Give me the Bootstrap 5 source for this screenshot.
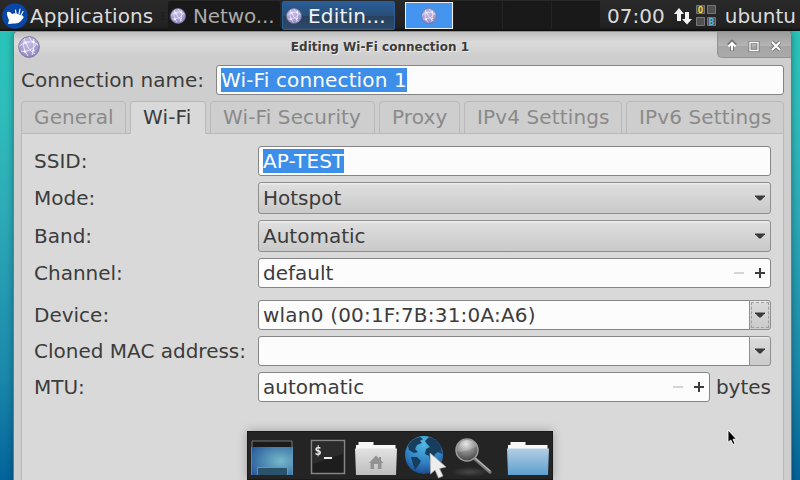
<!DOCTYPE html>
<html lang="en">
<head>
<meta charset="utf-8">
<meta name="viewport" content="width=device-width, initial-scale=1">
<title>Editing Wi-Fi connection 1</title>
<link href="https://cdn.jsdelivr.net/npm/bootstrap@5.3.0/dist/css/bootstrap.min.css" rel="stylesheet">
<style>
body{width:800px;height:480px;font:20px/24px "DejaVu Sans",sans-serif;color:#3c3c3c;background:linear-gradient(#28c4b9 30px,#2fbdbb 110px,#2daab7 215px,#1a88ab 375px,#04639a 480px)}
svg{display:block;flex:none}
.panel{height:31px;background:linear-gradient(#292929,#222 28px,#0e0e0e 31px);color:#dcdcdc}
.panel .menu-btn{width:168px;padding-left:2px}
.menu-btn span{margin-left:2px;letter-spacing:.1px}
.task{height:29px;margin-top:1px;border-radius:2px;white-space:nowrap}
.task span{padding-left:7px}
.task-net{width:112px;background:#191919;color:#a9a9a9;padding-left:2px;letter-spacing:-.1px}
.task-edit{width:113px;margin-left:2px;background:linear-gradient(#2a5d97,#294f79 50%,#28415c 52%,#2c4a6c);border:1px solid #2b5f99;color:#f2f2f2;padding-left:3px;letter-spacing:.2px}
.task-edit span{padding-left:6px}
.pager{width:195px;margin-left:10px;height:28px;background:#191919;margin-top:1px}
.pager div{width:49px;border-left:1px solid #242424}
.pager .current{width:48px;border:1px solid #f0f0f0;background:#4495ef;margin-top:1px;height:27px}
.clock{margin-right:1px}
.window{width:779px;height:470px;margin-left:13px;border:1px solid #777;border-top-color:#919191;border-radius:5px 5px 0 0;background:#cecece;box-shadow:0 0 7px #0005}
.titlebar{height:29px;background:linear-gradient(#bebebe,#dadada 10px,#cecece 25px);border-radius:5px 5px 0 0;font-size:12px;font-weight:bold;text-shadow:1px 1px #eee;margin-bottom:4px}
.win-title{line-height:30px;padding-left:3px;letter-spacing:.02px}
.win-btns{width:74px;height:26px;padding-right:2px;background:linear-gradient(#9b9b9b,#b5b5b5 55%,#a5a5a5 58%,#aaa);border:solid #929292;border-width:0 0 1px 1px;border-radius:0 4px 0 5px}
.win-btns svg{margin-top:2px}
.field{height:30px;border:1px solid #858585;border-radius:3px;background:#fcfcfc;padding:2px 4px;white-space:pre}
.sel{background:#3d8ee8;color:#fff;display:inline-block;height:24px;letter-spacing:.14px}
.addr{letter-spacing:.2px}
.conn{padding:0 7px}
.conn .field{width:568px}
.tabs{height:33px;margin:6px 7px 0;gap:4px;white-space:nowrap;position:relative;z-index:1}
.tab{height:33px;border:1px solid #b9b9b9;border-radius:4px 4px 0 0;color:#8a8a8a;background:#cecece;line-height:30px;padding-left:12px;letter-spacing:.13px}
.tab.on{background:#d9d9d9;color:#3c3c3c;border-bottom-color:#d9d9d9}
.pane{height:360px;margin:-1px 7px 0;border:1px solid #b9b9b9;background:#d9d9d9;padding:12px 12px 0}
.form-line{display:grid;grid-template-columns:224px 1fr;align-items:center;margin-bottom:6px;white-space:nowrap}
.combo{height:32px;border:1px solid #8f8f8f;border-radius:3px;background:linear-gradient(#ececec 1px,#dedede 2px,#c9c9c9);padding:3px 5px 3px 4px}
.drop{width:22px;height:30px;border:1px solid #8f8f8f;border-radius:0 3px 3px 0;background:linear-gradient(#ececec 1px,#dadada 2px,#cbcbcb);margin-left:-1px}
.drop.dash{outline:1px dashed #a0a0a0;outline-offset:-3px}
.dock{position:fixed;left:247px;top:431px;width:306px;height:49px;background:#242424;border:1px solid #191919;box-shadow:0 0 10px #0004}
.pointer{position:fixed;left:727px;top:429px}
</style>
<script src="https://cdn.jsdelivr.net/npm/bootstrap@5.3.0/dist/js/bootstrap.bundle.min.js"></script>
</head>
<body class="overflow-hidden">
<svg width="0" height="0" class="position-absolute">
<defs>
<radialGradient id="gl" cx=".45" cy=".3" r=".75"><stop offset="0" stop-color="#c9c0e8"/><stop offset=".6" stop-color="#a79dd3"/><stop offset="1" stop-color="#8a80ba"/></radialGradient>
<symbol id="net" viewBox="0 0 22 22"><circle cx="11" cy="11" r="10.4" fill="url(#gl)" stroke="#77738f" stroke-width=".8"/><g fill="none" stroke="#f0ecfb" stroke-width=".9"><path d="M1.5 10Q7 5 15.5 6L20 9M6.5 2.5Q4 10 7 15.500L10 20M7 15.500Q15 14 19 7M8 6.500Q10 14 17 18M15.500 3Q17 11 14 19M3 15L7 15.500M11 1Q13 5 15.500 6"/></g><g fill="#fff"><circle cx="7.500" cy="6.500" r="1.200"/><circle cx="15.500" cy="6" r="1.200"/><circle cx="7" cy="15.500" r="1.300"/><circle cx="15.500" cy="14.500" r="1.100"/></g></symbol>
<symbol id="tri" viewBox="0 0 10 6"><path d="M0 .5H10V1.200L6.300 4.900Q5 6 3.700 4.900L0 1.200Z" fill="#3a3a3a"/></symbol>
<radialGradient id="deskg" cx=".7" cy=".5" r=".8"><stop stop-color="#76b9ca"/><stop offset="1" stop-color="#285a9b"/></radialGradient>
<linearGradient id="home" x2="0" y2="1"><stop stop-color="#e2e2e2"/><stop offset="1" stop-color="#bdbdbd"/></linearGradient>
<linearGradient id="bluef" x2="0" y2="1"><stop stop-color="#b3cee2"/><stop offset="1" stop-color="#5d9fcf"/></linearGradient>
<radialGradient id="sea" cx=".5" cy=".2" r=".85"><stop stop-color="#52b9e4"/><stop offset=".6" stop-color="#2f80c2"/><stop offset="1" stop-color="#1b4386"/></radialGradient>
<radialGradient id="lens" cx=".45" cy=".22" r=".75"><stop stop-color="#e2e2e2"/><stop offset=".45" stop-color="#929292"/><stop offset="1" stop-color="#494949"/></radialGradient>
<radialGradient id="shade"><stop stop-color="#484848"/><stop offset="1" stop-color="#484848" stop-opacity="0"/></radialGradient>
</defs></svg>

<header class="panel d-flex">
  <div class="menu-btn d-flex align-items-center">
    <svg width="26" height="26" viewBox="0 0 26 26"><circle cx="13" cy="13" r="12.800" fill="#0846a8"/><path fill="#fff" d="M5 9Q8 8 10 11Q13 9.500 16 11L18 12Q22 12 21.500 15Q20 16 19 18Q16 21 12 20.500L6 21L7 17Q4.500 12 5 9Z"/><path d="M14 10.500L13.500 7M17 11L18 6M19 12L21 8.500" stroke="#fff" stroke-width="1.200" stroke-linecap="round"/></svg>
    <span>Applications</span>
    <svg class="ms-2" width="4" height="8"><path d="M0 1H4M0 4H4M0 7H4" stroke="#1a1a1a"/></svg>
  </div>
  <div class="task task-net d-flex align-items-center"><svg width="16" height="16"><use href="#net"/></svg><span>Netwo...</span></div>
  <div class="task task-edit d-flex align-items-center"><svg width="16" height="16"><use href="#net"/></svg><span>Editin...</span></div>
  <div class="pager d-flex"><div class="current d-flex align-items-center justify-content-center"><svg width="16" height="16"><use href="#net"/></svg></div><div></div><div></div><div></div></div>
  <div class="ms-auto d-flex align-items-center pe-1">
    <span class="clock">07:00</span>
    <svg class="ms-2" width="18" height="18" viewBox="0 0 18 18"><path fill="#f4f4f4" d="M5 1L10 7H7V14H3V7H0ZM11 5H15V12H18L13 17.500L8 12H11Z"/></svg>
    <svg class="ms-1" width="21" height="22" viewBox="0 0 21 22"><g fill="#505050" stroke="#777" stroke-width="1"><path d="M.5 .5H8.500V8.500H.5ZM11.500 .5H19.500V8.500H11.500ZM.5 12.500H8.500V20.500H.5ZM11.500 12.500H19.500V20.500H11.500Z"/></g><g font-family="DejaVu Sans Mono" font-size="9" font-weight="bold" text-anchor="middle"><text x="4.500" y="7.800" fill="#e3d536">O</text><text x="15.500" y="19.800" fill="#5db7e8">B</text></g></svg>
    <span class="ps-2">ubuntu</span>
  </div>
</header>

<main class="window">
  <div class="titlebar d-flex justify-content-between">
    <svg class="mt-1 ms-1" width="22" height="22"><use href="#net"/></svg>
    <span class="win-title flex-grow-1 text-center">Editing Wi-Fi connection 1</span>
    <div class="win-btns d-flex align-items-center justify-content-center">
      <svg width="54" height="14" viewBox="0 0 54 14"><g fill="none" stroke="#737373" stroke-width="4"><path d="M5 12V5M1.500 6.500L5 3L8.500 6.500"/><path d="M23 3.500H31V11.500H23Z" stroke-width="3"/><path d="M45 3L53 11M53 3L45 11"/></g><g fill="none" stroke="#fff" stroke-width="2"><path d="M5 11.500V5M1.500 7.500L5 4L8.500 7.500"/><path d="M23 3.500H31V11.500H23Z" stroke-width="1.300"/><path d="M45 3L53 11M53 3L45 11"/></g></svg>
    </div>
  </div>
  <div class="conn d-flex justify-content-between align-items-center"><label>Connection name:</label><div class="field"><span class="sel">Wi-Fi connection 1</span></div></div>
  <nav class="tabs d-flex">
    <div class="tab" style="width:105px">General</div><div class="tab on" style="width:76px">Wi-Fi</div><div class="tab" style="width:165px">Wi-Fi Security</div><div class="tab" style="width:81px">Proxy</div><div class="tab" style="width:158px">IPv4 Settings</div><div class="tab" style="width:158px">IPv6 Settings</div>
  </nav>
  <section class="pane">
    <div class="form-line"><label>SSID:</label><div class="field"><span class="sel">AP-TEST</span></div></div>
    <div class="form-line"><label>Mode:</label><div class="combo d-flex align-items-center justify-content-between">Hotspot<svg width="10" height="6"><use href="#tri"/></svg></div></div>
    <div class="form-line"><label>Band:</label><div class="combo d-flex align-items-center justify-content-between">Automatic<svg width="10" height="6"><use href="#tri"/></svg></div></div>
    <div class="form-line mb-2 pb-1"><label>Channel:</label><div class="field d-flex align-items-center justify-content-between">default<svg width="32" height="10"><path d="M0 5H10" stroke="#d5d5d5" stroke-width="2"/><path d="M21 5H31M26 0V10" stroke="#3c3c3c" stroke-width="2"/></svg></div></div>
    <div class="form-line"><label>Device:</label><div class="d-flex"><div class="field addr flex-grow-1 rounded-end-0">wlan0 (00:1F:7B:31:0A:A6)</div><div class="drop dash d-flex align-items-center justify-content-center"><svg width="10" height="6"><use href="#tri"/></svg></div></div></div>
    <div class="form-line"><label>Cloned MAC address:</label><div class="d-flex"><div class="field flex-grow-1 rounded-end-0"></div><div class="drop d-flex align-items-center justify-content-center"><svg width="10" height="6"><use href="#tri"/></svg></div></div></div>
    <div class="form-line"><label>MTU:</label><div class="d-flex align-items-center justify-content-between"><div class="field d-flex align-items-center justify-content-between" style="width:452px">automatic<svg width="32" height="10"><path d="M0 5H10" stroke="#d5d5d5" stroke-width="2"/><path d="M21 5H31M26 0V10" stroke="#3c3c3c" stroke-width="2"/></svg></div><span>bytes</span></div></div>
  </section>
</main>

<footer class="dock">
  <svg width="304" height="47" viewBox="248 432 304 47">
    <path d="M251 447H293V475H251Z" fill="url(#deskg)"/><path d="M252 447V441H292V447" fill="#1b1b1b" stroke="#777"/><path d="M251.500 447V475M292.500 447V475" stroke="#6b9bc4" stroke-opacity=".6"/><path d="M257.500 475V467.500H287.500V475" fill="#2b526b" stroke="#79a9bd" stroke-opacity=".7"/>
    <path d="M311.500 440.500H344.500V473.500H311.500Z" fill="#1d1d1d" stroke="#858585" stroke-width="1.500"/><path d="M313 442H343V454L313 464Z" fill="#2b2b2b"/><text x="314.500" y="455" font-family="DejaVu Sans Mono" font-size="12" font-weight="bold" fill="#eee">$</text><path d="M324 458H332" stroke="#eee" stroke-width="2"/>
    <path d="M356 450V445H358.500V442H373.500V445H395.500V450Z" fill="#f7f7f7"/><path d="M355 448.500H397L396 475H356Z" fill="url(#home)"/><path d="M369 463L376 455.500L379 458.500V457H381V460.500L383.500 463H381.500V469H378V464H374V469H370.500V463Z" fill="#929292"/>
    <circle cx="424" cy="455" r="19" fill="url(#sea)"/><g fill="#173d5f"><path d="M408 446Q411 439 420 437L423 439L420 441L422 443L417 445L415 449L418 452L414 453L409 450ZM411 457L417 457L421 461L418 466L415 470L413 464ZM425 441L429 437Q438 439 441 447L442 454L438 452L435 454L433 463L430 462L429 456L425 454L426 449L430 447L427 444Z"/></g><path d="M430 453L446 467L439.500 468.500L443 476L438.500 478L435 470L430.500 474Z" fill="#ededed" stroke="#aaa" stroke-width=".7"/>
    <ellipse cx="470" cy="472" rx="19" ry="5" fill="url(#shade)"/><path d="M474 458L490 472" stroke="#777" stroke-width="3.500" stroke-linecap="round"/><path d="M475 458L490 471" stroke="#b5b5b5" stroke-width="1.200"/><circle cx="467" cy="450" r="11" fill="url(#lens)" stroke="#999" stroke-width="1.500"/><path d="M457 451Q466 453 477 446Q474 440 467 440Q458 441 457 451Z" fill="#fff" opacity=".2"/>
    <path d="M508 450V445H510.500V442H525.500V445H547.500V450Z" fill="#f7f7f7"/><path d="M507 448.500H549L548 475H508Z" fill="url(#bluef)"/>
  </svg>
</footer>
<svg class="pointer" width="12" height="17" viewBox="0 0 12 17"><path d="M1 1V13.500L3.800 11L6 15.500L8 14.500L6 10.200H9.500Z" fill="#000" stroke="#fff" stroke-width=".9"/></svg>
</body>
</html>
